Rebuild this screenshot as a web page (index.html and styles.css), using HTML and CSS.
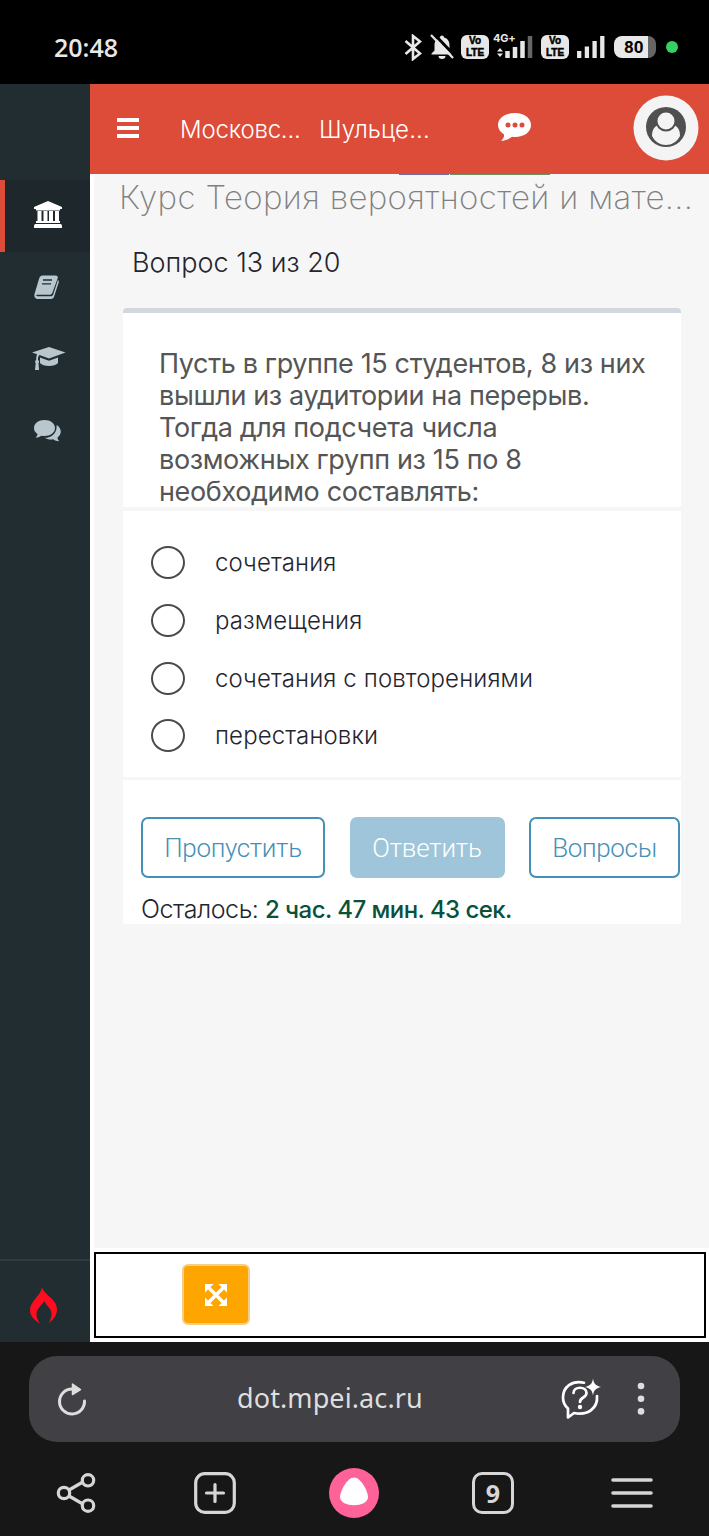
FILE: index.html
```
<!DOCTYPE html>
<html lang="ru">
<head>
    <meta charset="UTF-8">
    <meta name="viewport" content="width=device-width, initial-scale=1.0">
    <title>Вопрос 13 из 20</title>
    <link rel="stylesheet" href="styles.css">
</head>
<body>

    <div class="status-bar">
        <span class="clock">20:48</span>
        <div class="status-icons">
            <svg class="bluetooth" width="18" height="27" viewBox="0 0 18 27"><path d="M1.5 7 16 19.5 9 25V2l7 5.500L1.500 20" fill="none" stroke="#e8e8e8" stroke-width="2.600"/></svg>
            <svg class="bell" width="24" height="26" viewBox="0 0 24 26"><path d="M12 1.500a2 2 0 0 1 2 2c4 1 5.500 4 5.500 8v5l3 3v1h-21v-1l3-3v-5c0-4 1.500-7 5.500-8a2 2 0 0 1 2-2z" fill="#e8e8e8"/><path d="M8.500 22h7a3.500 3 0 0 1-7 0z" fill="#e8e8e8"/><path d="M3-1 25 22" stroke="#000" stroke-width="3"/><path d="M1 1 23 24" stroke="#e8e8e8" stroke-width="2.200"/></svg>
            <div class="volte"><span>Vo</span><span>LTE</span></div>
            <div class="network">
                <span class="network-type">4G+</span>
                <svg width="38" height="22" viewBox="0 0 38 22"><path d="M1 15.500 4 12l3 3.500zM1 17.500 4 21l3-3.500z" fill="#e8e8e8"/><path d="M11.500 15v7M19 11v11M26.500 5v17" stroke="#e8e8e8" stroke-width="4.500"/><path d="M34 0v22" stroke="#666" stroke-width="4.500"/></svg>
            </div>
            <div class="volte"><span>Vo</span><span>LTE</span></div>
            <svg class="signal" width="28" height="22" viewBox="0 0 28 22"><path d="M2.200 15v7M9.900 10.500V22M17.600 5v17M25.300 0v22" stroke="#e8e8e8" stroke-width="4.300"/></svg>
            <div class="battery"><span>80</span></div>
            <span class="privacy-dot"></span>
        </div>
    </div>

    <div class="page">
        <aside class="sidebar">
            <nav>
                <a class="nav-item active"><svg width="28" height="27" viewBox="0 0 28 27"><path d="M14 0 28 6v2h-2v1.500H2V8H0V6zM3.500 10h4v10h2V10h4v10h1.500V10h4v10h2V10h4v10h1v2H2v-2h1.500zM1 23h26l1 1.500V27H0v-2.500z" fill="#fff"/></svg></a>
                <a class="nav-item"><svg class="book" width="25" height="24" viewBox="0 0 25 24"><path d="M8.500.5h13c1.800 0 2.700 1 2.200 2.700L18.500 17.500c-.6 1.700-1.700 2.300-3.200 2.300H3c-1 0-1 1.500.5 1.500h13c1.500 0 2.300-.6 2.800-2L23.900 5c1 .7 1.100 1.500.8 2.500l-4.500 13.700C19.700 23 18.500 24 17 24H4C1 24 0 21.500.5 19L5 4c.6-2 1.700-3.500 3.500-3.500z" fill="#b8c7ce"/><path d="M9 5h9M8 8.800h9" stroke="#222d32" stroke-width="1.300"/></svg></a>
                <a class="nav-item"><svg class="cap" width="34" height="24" viewBox="0 0 34 24"><path d="M17 0 33.500 5.500 17 11.500 7.500 8C6 9 6 11 6 13c1.500 1 1.200 2.300.5 3L7 23H3l.7-7c-1-1-.8-2.200.5-3 0-2 .1-4 .9-5.700L0 5.500z" fill="#b8c7ce"/><path d="m8 10.500 9 3.200 9-3.200v5.500c-3 4-15 4-18 0z" fill="#b8c7ce"/></svg></a>
                <a class="nav-item"><svg width="27" height="22" viewBox="0 0 27 22"><path d="M10.500 0C16.500 0 21 3.500 21 8s-4.500 8-10.500 8c-1 0-2-.1-3-.3C5.500 17 3.500 17.500 1.500 17.500 2.800 16.300 3.500 15.500 3.500 14 1.300 12.500 0 10.500 0 8c0-4.500 4.500-8 10.500-8z" fill="#b8c7ce"/><path d="M22.500 5C28 8 28 14.500 23.500 17.500c0 1.500.8 2.500 1.700 3.800-2.500 0-4.500-.8-6-2-3 .6-6 .1-8.500-1.500C17.500 18 23.500 13 22.500 5z" fill="#b8c7ce"/></svg></a>
            </nav>
            <div class="sidebar-footer">
                <svg width="28" height="37" viewBox="0 0 28 37"><path d="M12 0c1 7 15 12 15 22 0 6-3 10-8 14 2-5 4-9 1-14-1.500-3-5-5-5.500-8C11 19 6.500 22 6.500 27c0 4 1.500 7 3.500 9.500C4 33 0 29 0 23 0 14 11 9 12 0z" fill="#ff0c20"/></svg>
            </div>
        </aside>

        <div class="content">
            <header class="navbar">
                <svg class="menu-toggle" width="22" height="20" viewBox="0 0 22 20"><path d="M0 2h22M0 10h22M0 18h22" stroke="#fff" stroke-width="4"/></svg>
                <span class="nav-org">Московс...</span>
                <span class="nav-user">Шульце...</span>
                <svg class="chat" width="34" height="28" viewBox="0 0 34 28"><path d="M17 0C26.500 0 33 5 33 12s-6.500 12-16 12c-1 0-2-.1-3-.2C11.500 26 7 27.800 3 27.800 5 26 6.500 24 6 21.500 2.500 19.200 0 16 0 12 0 5 7 0 17 0z" fill="#fff"/><path d="M10 9.500a2.500 2.500 0 1 0 0 5 2.500 2.500 0 0 0 0-5zm7 0a2.500 2.500 0 1 0 0 5 2.500 2.500 0 0 0 0-5zm7 0a2.500 2.500 0 1 0 0 5 2.500 2.500 0 0 0 0-5z" fill="#dd4b39"/></svg>
                <svg class="avatar" width="66" height="66" viewBox="0 0 66 66"><circle cx="33" cy="33" r="32.500" fill="#f4f4f4"/><circle cx="33" cy="32" r="20" fill="#505050"/><path d="M19 41c0-6 2-9 6-11 5 6 11 6 16 0 4 2 6 5 6 11-6 12-22 12-28 0z" fill="#f4f4f4"/><circle cx="33" cy="26" r="9.500" fill="#f4f4f4" stroke="#505050" stroke-width="2"/></svg>
            </header>

            <main>
                <div class="tab-edges"><i></i><i></i></div>
                <h1>Курс Теория вероятностей и мате...</h1>
                <h2>Вопрос 13 из 20</h2>

                <section class="box">
                    <p class="question">Пусть в группе 15 студентов, 8 из них<br>вышли из аудитории на перерыв.<br>Тогда для подсчета числа<br>возможных групп из 15 по 8<br>необходимо составлять:</p>
                    <div class="answers">
                        <label><i class="radio"></i><span>сочетания</span></label>
                        <label><i class="radio"></i><span>размещения</span></label>
                        <label><i class="radio"></i><span>сочетания с повторениями</span></label>
                        <label><i class="radio"></i><span>перестановки</span></label>
                    </div>
                    <div class="box-footer">
                        <div class="buttons">
                            <button class="btn skip">Пропустить</button>
                            <button class="btn answer">Ответить</button>
                            <button class="btn list">Вопросы</button>
                        </div>
                        <p class="timer">Осталось: <b>2 час. 47 мин. 43 сек.</b></p>
                    </div>
                </section>
            </main>

            <footer class="page-footer">
                <button class="fullscreen"><svg width="22" height="22" viewBox="0 0 22 22"><path d="M4 4l14 14M18 4 4 18" stroke="#fff" stroke-width="3.400"/><path d="M0 0h8.500L0 8.500zM22 0v8.500L13.500 0zM0 22v-8.500L8.500 22zM22 22h-8.500l8.500-8.500z" fill="#fff"/></svg></button>
            </footer>
        </div>
    </div>

    <div class="browser">
        <div class="address-bar">
            <svg class="reload" width="30" height="34" viewBox="0 0 30 34"><path d="M15 7a12.500 12.500 0 1 0 12.500 12" fill="none" stroke="#dedede" stroke-width="3" stroke-linecap="round"/><path d="M15.500 2v10.500L23.500 7.500z" fill="#dedede" stroke="#dedede" stroke-width="1.500" stroke-linejoin="round"/></svg>
            <span class="url">dot.mpei.ac.ru</span>
            <svg class="assistant" width="42" height="42" viewBox="0 0 42 42"><path d="M24 4.700C12 2 3 9 3 19.500c0 5 2 8.500 5 11V39.500l6-4.500C28 38 38 30 37 18" fill="none" stroke="#fff" stroke-width="2.700" stroke-linecap="round" stroke-linejoin="round"/><path d="M33 .5c1 5.500 2.500 7 8 8.500-5.500 1.500-7 3-8 8.500-1-5.500-2.500-7-8-8.500 5.500-1.500 7-3 8-8.500z" fill="#fff"/><path d="M13.500 15c0-7 13-7 13 0 0 5-6.500 4-6.500 9" fill="none" stroke="#fff" stroke-width="2.700" stroke-linecap="round"/><circle cx="20" cy="29" r="2.200" fill="#fff"/></svg>
            <svg class="dots" width="8" height="34" viewBox="0 0 8 34"><g fill="#dedede"><circle cx="4" cy="4" r="3.300"/><circle cx="4" cy="16.700" r="3.300"/><circle cx="4" cy="29.400" r="3.300"/></g></svg>
        </div>
        <div class="toolbar">
            <svg width="40" height="42" viewBox="0 0 40 42"><g fill="none" stroke="#d6d6d6" stroke-width="3.200"><path d="m13 18 13-7.500M13 24l13 7.500"/><circle cx="8" cy="21" r="5.700"/><circle cx="32" cy="8.300" r="5.700"/><circle cx="32" cy="33.700" r="5.700"/></g></svg>
            <svg width="42" height="42" viewBox="0 0 42 42"><rect x="1.700" y="1.700" width="38.600" height="38.600" rx="9" fill="none" stroke="#d6d6d6" stroke-width="3.200"/><path d="M21 12.500v17M12.500 21h17" stroke="#d6d6d6" stroke-width="3.200" stroke-linecap="round"/></svg>
            <svg width="50" height="50" viewBox="0 0 50 50"><circle cx="25" cy="25" r="25" fill="#ff6199"/><path d="M25 9.500c7 0 14 14 14 19.500 0 11-28 11-28 0 0-5.500 7-19.500 14-19.500z" fill="#fff"/></svg>
            <span class="tabs">9</span>
            <svg width="42" height="42" viewBox="0 0 42 42"><path d="M2 8h38M2 21h38M2 34h38" stroke="#d6d6d6" stroke-width="3.600" stroke-linecap="round"/></svg>
        </div>
    </div>

</body>
</html>
```
FILE: styles.css
```
* {
    box-sizing: border-box;
}

body {
    margin: 0;
    font-family: 'Inter', 'Roboto', sans-serif;
    font-weight: 300;
    background: #171717;
    color: #25252d;
}

svg {
    display: block;
    flex-shrink: 0;
}

h1, h2, p {
    margin: 0;
    font-weight: 300;
    white-space: nowrap;
}

/* Phone status bar */
.status-bar {
    height: 84px;
    padding: 10px 31px 0 54px;
    background: #000;
    display: flex;
    align-items: center;
    justify-content: space-between;
    color: #e8e8e8;
}

.clock {
    font: 600 25px/30px 'Open Sans', sans-serif;
}

.status-icons {
    display: flex;
    align-items: center;
}

.bell {
    margin: 0 7px 0 8px;
}

.volte {
    width: 28px;
    height: 24px;
    border-radius: 6px;
    background: #e8e8e8;
    color: #000;
    font: 700 10px/12px 'Liberation Sans', sans-serif;
    -webkit-text-stroke: 0.5px #000;
    display: flex;
    flex-direction: column;
    align-items: center;
}

.network {
    position: relative;
    margin: 0 7px 0 7px;
}

.network-type {
    position: absolute;
    left: -3px;
    top: -4px;
    font: 700 11px/12px 'Inter', sans-serif;
    letter-spacing: -0.2px;
}

.signal {
    margin: 0 9px 0 8px;
}

.battery {
    width: 42px;
    height: 22px;
    border-radius: 8px;
    background: linear-gradient(90deg, #e8e8e8 34px, #666 34px);
    color: #000;
    font: 700 17px/22px 'Roboto', sans-serif;
    padding-left: 10px;
}

.privacy-dot {
    width: 12px;
    height: 12px;
    border-radius: 50%;
    background: #35d263;
    margin-left: 10px;
}

/* Page */
.page {
    height: 1258px;
    display: flex;
}

.sidebar {
    width: 90px;
    padding-top: 96px;
    background: #222d32;
    display: flex;
    flex-direction: column;
    justify-content: space-between;
}

.nav-item {
    height: 72px;
    padding: 0 0 3px 34px;
    display: flex;
    align-items: center;
}

.nav-item.active {
    background: #1e282c;
    border-left: 5px solid #dd4b39;
    padding-left: 29px;
}

.cap {
    margin-left: -2px;
}

.sidebar-footer {
    height: 83px;
    border-top: 2px solid #2f3b41;
    padding: 26px 0 0 30px;
}

.content {
    width: 619px;
    background: #fff;
}

.navbar {
    height: 90px;
    background: #dd4b39;
    display: flex;
    align-items: center;
    padding-left: 27px;
    color: #fff;
    font-size: 24px;
}

.menu-toggle {
    margin-bottom: 2px;
}

.nav-org {
    width: 139px;
    margin-left: 41px;
    letter-spacing: -0.2px;
}

.nav-user {
    width: 179px;
    letter-spacing: 0.1px;
}

.chat {
    margin-bottom: 4px;
}

.avatar {
    margin: 0 0 2px 101px;
}

main {
    height: 1074px;
    margin-left: 4px;
    padding-left: 25px;
    background: #f6f6f6;
}

.tab-edges {
    height: 1px;
    display: flex;
    gap: 1px;
    margin-left: 280px;
}

.tab-edges i {
    width: 50px;
    background: #716ca0;
}

.tab-edges i + i {
    width: 100px;
    background: #6f8f67;
}

h1 {
    font-size: 33px;
    line-height: 44px;
    color: #808080;
    font-weight: 200;
    letter-spacing: 0.35px;
}

h2 {
    font-size: 27px;
    line-height: 40px;
    margin: 24px 0 0 13px;
}

.box {
    width: 558px;
    height: 616px;
    margin: 25px 0 0 4px;
    border-top: 5px solid #d2d6de;
    border-radius: 4px 4px 0 0;
    background: #fff;
}

.question {
    height: 198px;
    padding: 35px 0 0 36px;
    border-bottom: 4px solid #f6f6f6;
    color: #555;
    font-size: 27px;
    line-height: 32px;
    font-weight: 400;
    letter-spacing: -0.37px;
}

.answers {
    height: 269px;
    padding: 23px 0 0 28px;
    border-bottom: 3px solid #f6f6f6;
}

.answers label {
    height: 57.700px;
    display: flex;
    align-items: center;
    gap: 30px;
    font-size: 24px;
    letter-spacing: 0.12px;
}

.radio {
    width: 34px;
    height: 33px;
    border: 2px solid #4a4a4a;
    border-radius: 50%;
}

.box-footer {
    padding: 37px 0 0 18px;
}

.buttons {
    display: flex;
    gap: 24.500px;
}

.btn {
    height: 61px;
    width: 184px;
    padding: 0;
    border: 2px solid #4590b5;
    border-radius: 7px;
    background: #fff;
    color: #4590b5;
    font: 300 26px 'Roboto', sans-serif;
    letter-spacing: -0.35px;
}

.btn.answer {
    width: 155px;
    border-color: #9fc5db;
    background: #9fc5db;
    color: #fff;
    letter-spacing: -0.2px;
}

.btn.list {
    width: 151px;
}

.timer {
    margin-top: 13px;
    font-size: 25px;
    line-height: 36px;
    letter-spacing: -0.45px;
}

.timer b {
    font-weight: 500;
    font-size: 24px;
    letter-spacing: -0.55px;
    color: #08523c;
}

.page-footer {
    height: 86px;
    margin: 4px 3px 0 4px;
    border: 2px solid #000;
    padding: 10px 0 0 86px;
}

.fullscreen {
    width: 68px;
    height: 61px;
    padding: 0;
    border: 2px solid #f4cf8a;
    border-radius: 6px;
    background: #ffa500;
    display: flex;
    align-items: center;
    justify-content: center;
}

/* Browser controls */
.browser {
    height: 194px;
    padding-top: 14px;
}

.address-bar {
    height: 86px;
    margin: 0 29px;
    border-radius: 28px;
    background: #414045;
    display: flex;
    align-items: center;
    padding-left: 28px;
}

.url {
    width: 186px;
    margin: 0 0 3px 150px;
    color: #dedede;
    font: 400 27px/36px 'Noto Sans', sans-serif;
    letter-spacing: 0.1px;
}

.assistant {
    margin-left: 137px;
}

.dots {
    margin-left: 35px;
}

.toolbar {
    height: 94px;
    padding: 8px 8px 0 7px;
    display: grid;
    grid-template-columns: repeat(5, 1fr);
    place-items: center;
}

.tabs {
    width: 42px;
    height: 42px;
    border: 3px solid #d6d6d6;
    border-radius: 10px;
    color: #d6d6d6;
    font: 700 25px/36px 'Noto Sans', sans-serif;
    text-align: center;
}
```
